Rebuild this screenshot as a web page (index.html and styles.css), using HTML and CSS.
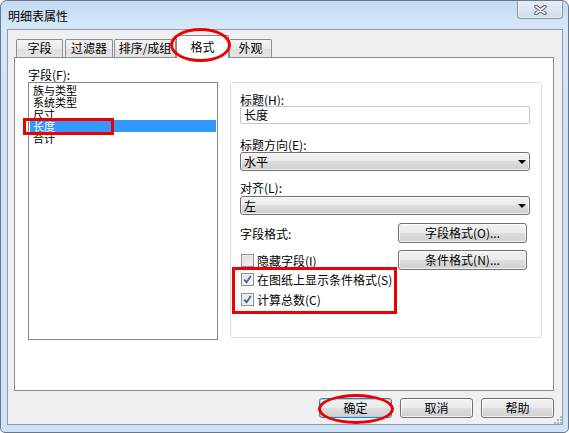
FILE: index.html
```html
<!DOCTYPE html>
<html lang="zh-CN">
<head>
<meta charset="utf-8">
<title>明细表属性</title>
<link rel="stylesheet" href="styles.css">
</head>
<body>
<div class="window">
  <div class="titlebar">
    <span class="title">明细表属性</span>
    <div class="close">
      <svg width="13" height="10" viewBox="0 0 13 10">
        <path d="M2 1.5 L11 8.5 M11 1.5 L2 8.5" stroke="#555a61" stroke-width="3.6" stroke-linecap="round" fill="none"/>
        <path d="M2 1.5 L11 8.5 M11 1.5 L2 8.5" stroke="#ffffff" stroke-width="1.6" stroke-linecap="round" fill="none"/>
      </svg>
    </div>
  </div>
  <div class="client">
    <div class="tabs">
      <div class="tab t1">字段</div>
      <div class="tab t2">过滤器</div>
      <div class="tab t3">排序/成组</div>
      <div class="tab selected">格式<span class="ring ring-tab"></span></div>
      <div class="tab t5">外观</div>
    </div>
    <div class="panel">
      <div class="fields">
        <div class="label">字段(F):</div>
        <div class="listbox">
          <div class="item">族与类型</div>
          <div class="item">系统类型</div>
          <div class="item">尺寸</div>
          <div class="item active">长度</div>
          <div class="item">合计</div>
          <span class="mark mark-list"></span>
        </div>
      </div>
      <div class="group">
        <div class="glabel l1">标题(H):</div>
        <div class="textbox">长度</div>
        <div class="glabel l2">标题方向(E):</div>
        <div class="combo c1"><span>水平</span><span class="arrow"></span></div>
        <div class="glabel l3">对齐(L):</div>
        <div class="combo c2"><span>左</span><span class="arrow"></span></div>
        <div class="row r1">
          <span>字段格式:</span>
          <button class="btn wide">字段格式(O)...</button>
        </div>
        <div class="row r2">
          <label class="check"><span class="box"></span>隐藏字段(I)</label>
          <button class="btn wide">条件格式(N)...</button>
        </div>
        <label class="check c-sheet"><span class="box checked"><svg width="9" height="9" viewBox="0 0 9 9"><path d="M1.2 4.6 L3.6 7.2 L7.8 1" stroke="#4b5f9a" stroke-width="1.8" fill="none"/></svg></span>在图纸上显示条件格式(S)</label>
        <label class="check c-total"><span class="box checked"><svg width="9" height="9" viewBox="0 0 9 9"><path d="M1.2 4.6 L3.6 7.2 L7.8 1" stroke="#4b5f9a" stroke-width="1.8" fill="none"/></svg></span>计算总数(C)</label>
        <span class="mark mark-group"></span>
      </div>
    </div>
    <div class="actions">
      <button class="btn default">确定<span class="ring ring-ok"></span></button>
      <button class="btn">取消</button>
      <button class="btn">帮助</button>
    </div>
    <svg class="grip" width="9" height="9" viewBox="0 0 9 9">
      <rect x="7" y="1" width="2" height="2" fill="#b8b8b8"/>
      <rect x="4" y="4" width="2" height="2" fill="#b8b8b8"/>
      <rect x="7" y="4" width="2" height="2" fill="#b8b8b8"/>
      <rect x="1" y="7" width="2" height="2" fill="#b8b8b8"/>
      <rect x="4" y="7" width="2" height="2" fill="#b8b8b8"/>
      <rect x="7" y="7" width="2" height="2" fill="#b8b8b8"/>
    </svg>
  </div>
</div>
</body>
</html>
```
FILE: styles.css
```css
* { box-sizing: border-box; }
html, body {
  margin: 0;
  padding: 0;
  background: #ffffff;
}
body {
  font-family: "Noto Sans CJK SC", "Liberation Sans", sans-serif;
  font-size: 12px;
  color: #000;
}
.window {
  width: 569px;
  height: 433px;
  border: 1px solid #68778a;
  border-radius: 7px 7px 5px 5px;
  background: linear-gradient(180deg, #c4dcf4 0px, #d7e8f8 28px, #cde2f6 120px, #cde2f6 100%);
  display: flex;
  flex-direction: column;
  overflow: hidden;
}
.titlebar {
  height: 28px;
  flex: none;
  display: flex;
  justify-content: space-between;
  align-items: flex-start;
  padding: 0 5px 0 7px;
}
.title {
  margin-top: 8px;
  line-height: 14px;
  font-size: 12px;
  color: #000;
}
.close {
  width: 46px;
  height: 19px;
  margin-top: -1px;
  border: 1px solid #8596ab;
  border-top: none;
  border-radius: 0 0 4px 4px;
  background: linear-gradient(180deg, #e7eff8 0%, #dbe6f2 50%, #cddbea 100%);
  box-shadow: inset 0 0 0 1px rgba(255,255,255,0.6);
  display: flex;
  justify-content: center;
  padding-top: 5px;
}
.close svg { display: block; }
.client {
  flex: 1;
  margin: 0 5px 7px 6px;
  border: 1px solid #8d9db2;
  background: #f0f0f0;
  padding: 5px 8px 6px 6px;
  display: flex;
  flex-direction: column;
  position: relative;
}
.tabs {
  height: 22px;
  flex: none;
  display: flex;
  align-items: flex-end;
  padding-left: 2px;
}
.tab {
  height: 18px;
  border: 1px solid #898c95;
  border-bottom: none;
  border-radius: 2px 2px 0 0;
  background: linear-gradient(180deg, #f3f3f3 0%, #ebebeb 50%, #dedede 50%, #e5e5e5 100%);
  text-align: center;
  line-height: 14px;
  padding-top: 1px;
  white-space: nowrap;
}
.t1 { width: 47px; }
.t2 { width: 48px; margin-left: 2px; }
.t3 { width: 62px; margin-left: 1px; }
.t5 { width: 43px; }
.tab.selected {
  width: 53px;
  height: 23px;
  margin-bottom: -1px;
  background: #ffffff;
  padding-top: 4px;
  position: relative;
  z-index: 2;
}
.ring {
  position: absolute;
  border: 3px solid #ee0000;
  border-radius: 50%;
  pointer-events: none;
}
.ring-tab {
  left: -7px;
  top: -8px;
  width: 61px;
  height: 34px;
}
.panel {
  height: 334px;
  flex: none;
  border: 1px solid #898c95;
  background: #ffffff;
  display: flex;
  align-items: flex-start;
}
.fields {
  margin-left: 13px;
  margin-top: 10px;
}
.label {
  line-height: 14px;
}
.listbox {
  position: relative;
  width: 190px;
  height: 258px;
  border: 1px solid #828790;
  padding-top: 1px;
}
.item {
  height: 12px;
  line-height: 12px;
  font-size: 11px;
  padding-left: 3px;
  margin: 0 1px;
  white-space: nowrap;
}
.item.active {
  background: #3399ff;
  color: #ffffff;
}
.mark {
  position: absolute;
  border: 3px solid #ee0000;
  pointer-events: none;
}
.mark-list {
  left: -6px;
  top: 35px;
  width: 91px;
  height: 17px;
}
.group {
  position: relative;
  margin-left: 12px;
  margin-top: 24px;
  width: 312px;
  height: 256px;
  border: 1px solid #d5dfe5;
  border-radius: 3px;
  padding: 0 11px 0 9px;
  display: flex;
  flex-direction: column;
  align-items: flex-start;
}
.glabel {
  line-height: 13px;
}
.l1 { margin-top: 10px; }
.l2 { margin-top: 14px; }
.l3 { margin-top: 10px; }
.textbox {
  width: 290px;
  height: 18px;
  border: 1px solid #c5c9ce;
  border-radius: 2px;
  line-height: 15px;
  padding-left: 3px;
  background: #fff;
}
.combo {
  width: 290px;
  height: 19px;
  border: 1px solid #707070;
  border-radius: 3px;
  background: linear-gradient(180deg, #f2f2f2 0%, #ebebeb 50%, #dddddd 50%, #cfcfcf 100%);
  box-shadow: inset 0 0 0 1px rgba(255,255,255,0.7);
  display: flex;
  justify-content: space-between;
  align-items: center;
  padding: 0 3px 0 3px;
  line-height: 15px;
}
.c1 { margin-top: 1px; }
.c2 { margin-top: 2px; }
.arrow {
  width: 0;
  height: 0;
  border-left: 4px solid transparent;
  border-right: 4px solid transparent;
  border-top: 4px solid #000;
  margin-top: 1px;
}
.row {
  width: 290px;
  display: flex;
  justify-content: space-between;
  align-items: center;
}
.r1 { margin-top: 8px; }
.r2 { margin-top: 7px; }
.btn {
  font-family: inherit;
  font-size: 12px;
  color: #000;
  width: 73px;
  height: 20px;
  border: 1px solid #707070;
  border-radius: 3px;
  background: linear-gradient(180deg, #f2f2f2 0%, #ebebeb 50%, #dddddd 50%, #cfcfcf 100%);
  box-shadow: inset 0 0 0 1px rgba(252,252,252,0.8);
  padding: 0;
  line-height: 16px;
  text-align: center;
  position: relative;
}
.btn.wide {
  width: 129px;
  margin-right: 3px;
}
.check {
  display: flex;
  align-items: center;
  line-height: 13px;
  white-space: nowrap;
}
.box {
  width: 13px;
  height: 13px;
  margin-left: 1px;
  margin-right: 3px;
  border: 1px solid #8e8f8f;
  background: linear-gradient(135deg, #dcdcdc 0%, #f4f4f4 100%);
  box-shadow: inset 0 0 0 1px #f2f2f2;
  display: flex;
  align-items: center;
  justify-content: center;
}
.box.checked {
  background: linear-gradient(135deg, #e4e4e4 0%, #f6f6f6 100%);
}
.box svg { display: block; }
.c-sheet { margin-top: 3px; }
.c-total { margin-top: 7px; }
.mark-group {
  left: 1px;
  top: 184px;
  width: 165px;
  height: 47px;
}
.actions {
  margin-top: 7px;
  display: flex;
  justify-content: flex-end;
  gap: 8px;
}
.btn.default {
  border-color: #3c7fb1;
  box-shadow: inset 0 0 0 1px #8fdcf6;
}
.ring-ok {
  left: -2px;
  top: -5px;
  width: 76px;
  height: 30px;
}
.grip {
  position: absolute;
  right: 0;
  bottom: 0;
}
```
